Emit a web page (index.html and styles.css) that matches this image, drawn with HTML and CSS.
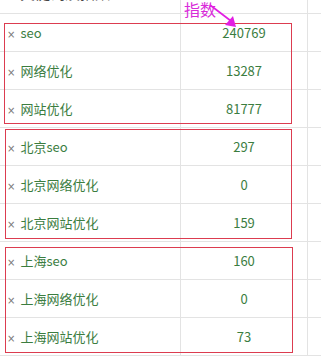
FILE: index.html
```html
<!DOCTYPE html>
<html lang="zh">
<head>
<meta charset="utf-8">
<link rel="stylesheet" href="styles.css">
</head>
<body>
<div class="sheet">
  <div class="row head">
    <div class="cell kw"><span class="cut">关键词及指数</span></div>
    <div class="cell num"></div>
    <div class="cell rest"></div>
  </div>
  <div class="row"><div class="cell kw"><span><span class="x">×</span>seo</span></div><div class="cell num">240769</div><div class="cell rest"></div></div>
  <div class="row"><div class="cell kw"><span><span class="x">×</span>网络优化</span></div><div class="cell num">13287</div><div class="cell rest"></div></div>
  <div class="row"><div class="cell kw"><span><span class="x">×</span>网站优化</span></div><div class="cell num">81777</div><div class="cell rest"></div></div>
  <div class="row"><div class="cell kw"><span><span class="x">×</span>北京seo</span></div><div class="cell num">297</div><div class="cell rest"></div></div>
  <div class="row"><div class="cell kw"><span><span class="x">×</span>北京网络优化</span></div><div class="cell num">0</div><div class="cell rest"></div></div>
  <div class="row"><div class="cell kw"><span><span class="x">×</span>北京网站优化</span></div><div class="cell num">159</div><div class="cell rest"></div></div>
  <div class="row"><div class="cell kw"><span><span class="x">×</span>上海seo</span></div><div class="cell num">160</div><div class="cell rest"></div></div>
  <div class="row"><div class="cell kw"><span><span class="x">×</span>上海网络优化</span></div><div class="cell num">0</div><div class="cell rest"></div></div>
  <div class="row"><div class="cell kw"><span><span class="x">×</span>上海网站优化</span></div><div class="cell num">73</div><div class="cell rest"></div></div>

  <div class="box box1"></div>
  <div class="box box2"></div>
  <div class="box box3"></div>

  <div class="note">指数</div>
  <svg class="arrow" width="40" height="30" viewBox="0 0 40 30">
    <path d="M1 2 L22 18" stroke="#e21fe2" stroke-width="1.6" fill="none"/>
    <path d="M27 24 L16 22 L24 13 Z" fill="#e21fe2"/>
  </svg>
</div>
</body>
</html>
```

FILE: styles.css
```css
* { box-sizing: border-box; }
html, body { margin: 0; padding: 0; background: #fff; }
body {
  font-family: "Noto Sans CJK SC", "Noto Sans", sans-serif;
  font-size: 13px;
  overflow: hidden;
}
.sheet {
  position: relative;
  width: 321px;
  height: 364px;
}
.row {
  display: grid;
  grid-template-columns: 181px 127px 1fr;
  height: 38px;
  border-bottom: 1px solid #e3e3e3;
}
.row.head {
  height: 14px;
  overflow: hidden;
}
.cell {
  display: flex;
  align-items: center;
  white-space: nowrap;
  color: #3b7d3f;
}
.kw {
  padding-left: 7px;
  padding-bottom: 1px;
  border-right: 1px solid #e3e3e3;
}
.num {
  justify-content: center;
  border-right: 1px solid #e3e3e3;
  padding-bottom: 1px;
}
.x {
  color: #777;
  margin-right: 5px;
  font-family: "DejaVu Sans", sans-serif;
  font-size: 10px;
}
.head .kw {
  align-items: flex-start;
  padding-left: 20px;
}
.cut {
  color: #444;
  font-size: 15px;
  line-height: 16px;
  margin-top: -15px;
}
.box {
  position: absolute;
  border: 1px solid #dc3c50;
}
.box1 { left: 4px; top: 23px; width: 288px; height: 101px; }
.box2 { left: 5px; top: 129px; width: 287px; height: 110px; }
.box3 { left: 5px; top: 247px; width: 288px; height: 106px; }
.note {
  position: absolute;
  left: 184px;
  top: -1px;
  font-size: 16px;
  line-height: 20px;
  color: #d92bd9;
}
.arrow {
  position: absolute;
  left: 209px;
  top: 3px;
}
```
